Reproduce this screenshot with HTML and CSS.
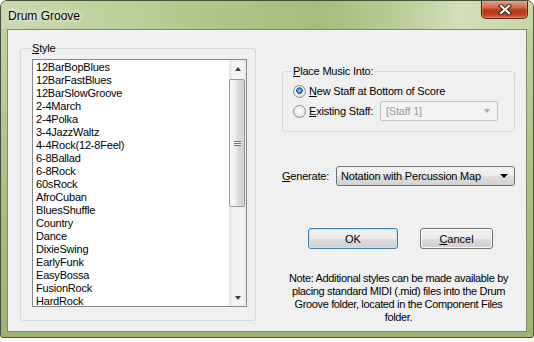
FILE: index.html
```html
<!DOCTYPE html>
<html lang="en">
<head>
  <meta charset="UTF-8">
  <title>Drum Groove</title>
  <link rel="stylesheet" href="styles.css">
</head>
<body>

  <div class="window">
    <!-- Title bar -->
    <div class="titlebar">
      <span class="title">Drum Groove</span>
      <button class="close" title="Close">
        <svg width="14" height="11" viewBox="0 0 14 11">
          <path d="M3 2 L11 9 M11 2 L3 9" stroke="#3b2118" stroke-width="4.2" stroke-linecap="square" fill="none"/>
          <path d="M3 2 L11 9 M11 2 L3 9" stroke="#ffffff" stroke-width="2.2" stroke-linecap="square" fill="none"/>
        </svg>
      </button>
    </div>

    <div class="client">
      <!-- Style list -->
      <fieldset class="group style-group">
        <legend><u>S</u>tyle</legend>
        <div class="listbox">
          <ul class="items">
            <li>12BarBopBlues</li>
            <li>12BarFastBlues</li>
            <li>12BarSlowGroove</li>
            <li>2-4March</li>
            <li>2-4Polka</li>
            <li>3-4JazzWaltz</li>
            <li>4-4Rock(12-8Feel)</li>
            <li>6-8Ballad</li>
            <li>6-8Rock</li>
            <li>60sRock</li>
            <li>AfroCuban</li>
            <li>BluesShuffle</li>
            <li>Country</li>
            <li>Dance</li>
            <li>DixieSwing</li>
            <li>EarlyFunk</li>
            <li>EasyBossa</li>
            <li>FusionRock</li>
            <li>HardRock</li>
          </ul>
          <div class="scrollbar">
            <div class="sb-btn"><span class="tri-up"></span></div>
            <div class="track">
              <div class="thumb"><span class="grip"></span></div>
            </div>
            <div class="sb-btn"><span class="tri-down"></span></div>
          </div>
        </div>
      </fieldset>

      <!-- Right side options -->
      <div class="side">
        <fieldset class="group place-group">
          <legend><u>P</u>lace Music Into:</legend>
          <div class="radio-row">
            <span class="radio checked"></span>
            <span><u>N</u>ew Staff at Bottom of Score</span>
          </div>
          <div class="radio-row">
            <span class="radio"></span>
            <span class="staff-label"><u>E</u>xisting Staff:</span>
            <div class="combo disabled">
              <span>[Staff 1]</span>
              <span class="tri-down"></span>
            </div>
          </div>
        </fieldset>

        <div class="generate-row">
          <span class="gen-label"><u>G</u>enerate:</span>
          <div class="combo gen-combo">
            <span>Notation with Percussion Map</span>
            <span class="tri-down big"></span>
          </div>
        </div>

        <div class="buttons">
          <button class="btn ok">OK</button>
          <button class="btn cancel"><u>C</u>ancel</button>
        </div>

        <p class="note">Note: Additional styles can be made available by<br>
          placing standard MIDI (.mid) files into the Drum<br>
          Groove folder, located in the Component Files<br>
          folder.</p>
      </div>
    </div>
  </div>

</body>
</html>
```

FILE: styles.css
```css
body {
  margin: 0;
  background: #fff;
  font-family: "Liberation Sans", Arial, sans-serif;
  font-size: 11px;
  letter-spacing: -0.2px;
  color: #000;
}
.window {
  width: 534px;
  height: 338px;
  box-sizing: border-box;
  border: 1px solid #46513a;
  border-radius: 7px 7px 3px 3px;
  background: linear-gradient(to bottom, #c4d4a3, #abc083 55%, #9cb374);
  display: flex;
  flex-direction: column;
  overflow: hidden;
}
.titlebar {
  height: 28px;
  display: flex;
  align-items: flex-start;
  background: linear-gradient(to right, #cbd9ae 0%, #bdd09a 22%, #afc487 42%, #a6bc7c 60%, #b9cb94 74%, #d2dfba 86%, #c7d6a8 100%);
}
.title {
  margin: 8px 0 0 7px;
  font-size: 12px;
  line-height: 14px;
  letter-spacing: 0;
  text-shadow: 0 0 6px #fff, 0 0 3px #eef4e2;
}
.close {
  margin: 0 5px 0 auto;
  width: 47px;
  height: 18px;
  padding: 0;
  border: 1px solid #55200f;
  border-top: none;
  border-radius: 0 0 5px 5px;
  background: linear-gradient(#e29c88 0%, #d2694c 40%, #b9381a 52%, #bd3f1c 78%, #d86a45 100%);
  display: flex;
  align-items: center;
  justify-content: center;
  box-shadow: inset 0 0 0 1px rgba(255, 200, 180, 0.3);
}
.client {
  margin: 0 6px;
  height: 303px;
  box-sizing: border-box;
  border: 1px solid #7f8c69;
  background: #f0f0f0;
  display: flex;
  align-items: flex-start;
  padding: 11px 0 0 12px;
}
.group {
  margin: 0;
  border: 1px solid #d3dbe0;
  border-radius: 3px;
  min-width: 0;
}
.group legend {
  padding: 0 1px;
  margin-left: -1px;
  line-height: 14px;
}
.style-group {
  width: 236px;
  box-sizing: border-box;
  padding: 4px 8px 13px 11px;
}
.listbox {
  height: 248px;
  box-sizing: border-box;
  border: 1px solid #828790;
  background: #fff;
  display: flex;
}
.items {
  list-style: none;
  margin: 0;
  padding: 1px 0 0 3px;
  flex: 1;
  overflow: hidden;
}
.items li {
  height: 13px;
  line-height: 13px;
  white-space: nowrap;
}
.scrollbar {
  width: 17px;
  display: flex;
  flex-direction: column;
  background: linear-gradient(to right, #e6e6e6, #f3f3f3 25%, #f3f3f3 80%, #e8e8e8);
}
.sb-btn {
  height: 17px;
  display: flex;
  align-items: center;
  justify-content: center;
}
.tri-up {
  width: 0;
  height: 0;
  border-left: 3.5px solid transparent;
  border-right: 3.5px solid transparent;
  border-bottom: 4px solid #3c3c3c;
}
.tri-down {
  width: 0;
  height: 0;
  border-left: 3.5px solid transparent;
  border-right: 3.5px solid transparent;
  border-top: 4px solid #3c3c3c;
}
.track {
  flex: 1;
}
.thumb {
  margin-top: 2px;
  width: 16px;
  height: 128px;
  box-sizing: border-box;
  border: 1px solid #979797;
  border-radius: 2px;
  background: linear-gradient(to right, #f6f6f6, #ececec 45%, #dadada 55%, #d2d2d2);
  display: flex;
  align-items: center;
  justify-content: center;
}
.grip {
  width: 7px;
  height: 5px;
  background: repeating-linear-gradient(to bottom, #707070 0 1px, #f4f4f4 1px 2px);
}
.side {
  width: 233px;
  margin-left: 26px;
  display: flex;
  flex-direction: column;
}
.place-group {
  margin-top: 23px;
  padding: 3px 10px 10px 10px;
}
.radio-row {
  display: flex;
  align-items: center;
  height: 20px;
}
.radio {
  flex: none;
  width: 13px;
  height: 13px;
  box-sizing: border-box;
  margin-right: 3px;
  border-radius: 50%;
  border: 1px solid #8e8f8f;
  background: radial-gradient(circle at 50% 40%, #ffffff 0, #ececec 55%, #d0d0d0 100%);
}
.radio.checked {
  background:
    radial-gradient(circle at 50% 42%, #b7e2ff 0, #3d95e6 1.6px, #1c5ea8 3px, rgba(28, 94, 168, 0) 3.6px),
    radial-gradient(circle at 50% 40%, #ffffff 0, #ececec 55%, #d0d0d0 100%);
}
.staff-label {
  width: 71px;
}
.combo {
  height: 20px;
  box-sizing: border-box;
  display: flex;
  align-items: center;
  justify-content: space-between;
  border-radius: 2px;
}
.combo.disabled {
  width: 118px;
  padding: 0 7px 0 5px;
  border: 1px solid #c5c5c5;
  background: #f3f3f3;
  color: #9c9c9c;
}
.combo.disabled .tri-down {
  border-top-color: #a9a9a9;
}
.generate-row {
  margin-top: 34px;
  display: flex;
  align-items: center;
}
.gen-label {
  width: 54px;
}
.gen-combo {
  width: 179px;
  padding: 0 6px 0 4px;
  border: 1px solid #707070;
  border-radius: 3px;
  background: linear-gradient(#f3f3f3 0%, #ececec 50%, #dedede 51%, #d2d2d2 100%);
}
.tri-down.big {
  border-left-width: 4px;
  border-right-width: 4px;
  border-top-width: 4px;
  border-top-color: #000;
}
.buttons {
  margin-top: 42px;
  padding-left: 26px;
  display: flex;
  gap: 22px;
}
.btn {
  height: 21px;
  padding: 0;
  font-family: "Liberation Sans", Arial, sans-serif;
  font-size: 11px;
  color: #000;
  border: 1px solid #707070;
  border-radius: 3px;
  background: linear-gradient(#f2f2f2 0%, #ebebeb 50%, #dddddd 51%, #cfcfcf 100%);
  box-shadow: inset 0 0 0 1px #fbfbfb;
}
.btn.ok {
  width: 90px;
  border-color: #3c7fb1;
  box-shadow: inset 0 0 0 1px #bfe7fb;
}
.btn.cancel {
  width: 73px;
}
.note {
  margin: 23px 0 0;
  line-height: 13px;
  letter-spacing: -0.35px;
  text-align: center;
  white-space: nowrap;
}
```
